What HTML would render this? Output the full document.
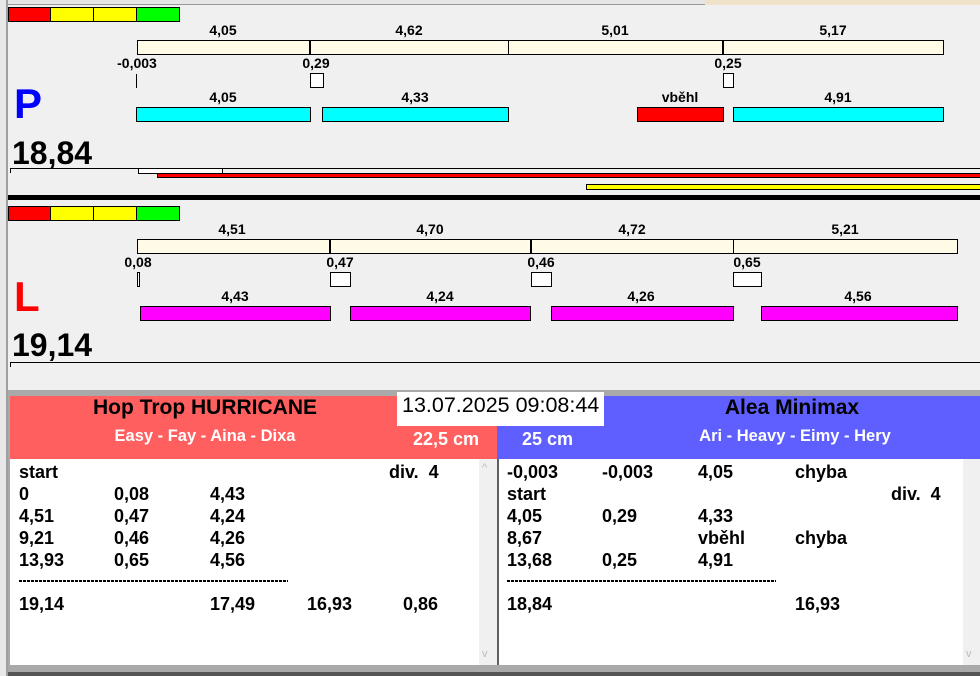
<!DOCTYPE html>
<html><head><meta charset="utf-8"><style>
*{margin:0;padding:0;box-sizing:border-box}
body{width:980px;height:676px;overflow:hidden;background:#f0f0f0;position:relative;font-family:"Liberation Sans",Arial,sans-serif;font-weight:bold;color:#000}
.a{position:absolute}
.b{position:absolute;border:1px solid #000}
.t{position:absolute;font-size:14px;transform:translateX(-50%);line-height:14px;white-space:nowrap}
.r{position:absolute;font-size:18px;line-height:22px;white-space:nowrap}
.d{position:absolute;height:2px;background:repeating-linear-gradient(90deg,#000 0 3px,transparent 3px 4px)}
</style></head><body>
<div class="a" style="left:0;top:0;width:980px;height:5px;background:#e6e6e6;border-bottom:1px solid #999"></div>
<div class="a" style="left:705px;top:0;width:275px;height:5px;background:#efe2c8"></div>
<div class="a" style="left:0;top:0;width:8px;height:676px;background:#e8e8e8;border-right:2px solid #a0a0a0"></div>

<div class="b" style="left:8px;top:7px;width:43px;height:15px;background:#f00"></div>
<div class="b" style="left:50px;top:7px;width:44px;height:15px;background:#ff0"></div>
<div class="b" style="left:93px;top:7px;width:44px;height:15px;background:#ff0"></div>
<div class="b" style="left:136px;top:7px;width:44px;height:15px;background:#0f0"></div>

<div class="t" style="left:223px;top:23px">4,05</div>
<div class="t" style="left:409px;top:23px">4,62</div>
<div class="t" style="left:615px;top:23px">5,01</div>
<div class="t" style="left:833px;top:23px">5,17</div>
<div class="b" style="left:137px;top:40px;width:807px;height:15px;background:#fffbe6"></div>
<div class="a" style="left:309px;top:40px;width:2px;height:15px;background:#000"></div>
<div class="a" style="left:508px;top:40px;width:1px;height:15px;background:#000"></div>
<div class="a" style="left:722px;top:40px;width:2px;height:15px;background:#000"></div>
<div class="t" style="left:137px;top:56px">-0,003</div>
<div class="t" style="left:316px;top:56px">0,29</div>
<div class="t" style="left:728px;top:56px">0,25</div>
<div class="a" style="left:136px;top:74px;width:1px;height:14px;background:#000"></div>
<div class="b" style="left:310px;top:73px;width:14px;height:15px;background:#fff"></div>
<div class="b" style="left:723px;top:73px;width:11px;height:15px;background:#fff"></div>
<div class="t" style="left:223px;top:90px">4,05</div>
<div class="t" style="left:415px;top:90px">4,33</div>
<div class="t" style="left:680px;top:90px">vběhl</div>
<div class="t" style="left:838px;top:90px">4,91</div>
<div class="b" style="left:136px;top:107px;width:175px;height:15px;background:#0ff"></div>
<div class="b" style="left:322px;top:107px;width:187px;height:15px;background:#0ff"></div>
<div class="b" style="left:637px;top:107px;width:87px;height:15px;background:#f00"></div>
<div class="b" style="left:733px;top:107px;width:211px;height:15px;background:#0ff"></div>
<div class="a" style="left:14px;top:80px;font-size:42px;line-height:48px;color:#0000ff">P</div>
<div class="a" style="left:12px;top:135px;font-size:32px;line-height:36px">18,84</div>
<div class="a" style="left:10px;top:168px;width:970px;height:1px;background:#000"></div>
<div class="a" style="left:10px;top:168px;width:1px;height:5px;background:#000"></div>
<div class="b" style="left:138px;top:168px;width:85px;height:6px;background:#fff"></div>
<div class="b" style="left:157px;top:173px;width:830px;height:5px;background:#f00"></div>
<div class="b" style="left:586px;top:184px;width:400px;height:6px;background:#ff0"></div>
<div class="a" style="left:8px;top:195px;width:972px;height:5px;background:#000"></div>

<div class="b" style="left:8px;top:206px;width:43px;height:15px;background:#f00"></div>
<div class="b" style="left:50px;top:206px;width:44px;height:15px;background:#ff0"></div>
<div class="b" style="left:93px;top:206px;width:44px;height:15px;background:#ff0"></div>
<div class="b" style="left:136px;top:206px;width:44px;height:15px;background:#0f0"></div>
<div class="t" style="left:232px;top:222px">4,51</div>
<div class="t" style="left:430px;top:222px">4,70</div>
<div class="t" style="left:632px;top:222px">4,72</div>
<div class="t" style="left:845px;top:222px">5,21</div>
<div class="b" style="left:137px;top:239px;width:821px;height:15px;background:#fffbe6"></div>
<div class="a" style="left:329px;top:239px;width:2px;height:15px;background:#000"></div>
<div class="a" style="left:530px;top:239px;width:2px;height:15px;background:#000"></div>
<div class="a" style="left:733px;top:239px;width:1px;height:15px;background:#000"></div>
<div class="t" style="left:138px;top:255px">0,08</div>
<div class="t" style="left:340px;top:255px">0,47</div>
<div class="t" style="left:541px;top:255px">0,46</div>
<div class="t" style="left:747px;top:255px">0,65</div>
<div class="b" style="left:137px;top:272px;width:3px;height:15px;background:#fff"></div>
<div class="b" style="left:330px;top:272px;width:21px;height:15px;background:#fff"></div>
<div class="b" style="left:531px;top:272px;width:21px;height:15px;background:#fff"></div>
<div class="b" style="left:733px;top:272px;width:29px;height:15px;background:#fff"></div>
<div class="t" style="left:235px;top:289px">4,43</div>
<div class="t" style="left:440px;top:289px">4,24</div>
<div class="t" style="left:641px;top:289px">4,26</div>
<div class="t" style="left:858px;top:289px">4,56</div>
<div class="b" style="left:140px;top:306px;width:191px;height:15px;background:#f0f"></div>
<div class="b" style="left:350px;top:306px;width:181px;height:15px;background:#f0f"></div>
<div class="b" style="left:551px;top:306px;width:183px;height:15px;background:#f0f"></div>
<div class="b" style="left:761px;top:306px;width:197px;height:15px;background:#f0f"></div>
<div class="a" style="left:14px;top:273px;font-size:42px;line-height:48px;color:#ff0000">L</div>
<div class="a" style="left:12px;top:327px;font-size:32px;line-height:36px">19,14</div>
<div class="a" style="left:10px;top:362px;width:970px;height:1px;background:#000"></div>
<div class="a" style="left:10px;top:362px;width:1px;height:5px;background:#000"></div>

<div class="a" style="left:8px;top:390px;width:972px;height:286px;background:#a9a9a9"></div>
<div class="a" style="left:10px;top:396px;width:487px;height:63px;background:#ff5f5f"></div>
<div class="a" style="left:497px;top:396px;width:483px;height:63px;background:#5f5fff"></div>
<div class="a" style="left:205px;top:396px;transform:translateX(-50%);font-size:21px;line-height:24px;white-space:nowrap">Hop Trop HURRICANE</div>
<div class="a" style="left:205px;top:427px;transform:translateX(-50%);font-size:16.5px;line-height:18px;color:#fff;white-space:nowrap">Easy - Fay - Aina - Dixa</div>
<div class="a" style="left:792px;top:396px;transform:translateX(-50%);font-size:21px;line-height:24px;white-space:nowrap">Alea Minimax</div>
<div class="a" style="left:795px;top:427px;transform:translateX(-50%);font-size:16.5px;line-height:18px;color:#fff;white-space:nowrap">Ari - Heavy - Eimy - Hery</div>
<div class="a" style="left:413px;top:428px;font-size:18px;line-height:22px;color:#fff">22,5 cm</div>
<div class="a" style="left:522px;top:428px;font-size:18px;line-height:22px;color:#fff">25 cm</div>
<div class="a" style="left:397px;top:392px;width:207px;height:34px;background:#fff"></div>
<div class="a" style="left:402px;top:392px;font-size:21.5px;line-height:26px;font-weight:normal;white-space:nowrap">13.07.2025 09:08:44</div>

<div class="a" style="left:10px;top:459px;width:487px;height:206px;background:#fff"></div>
<div class="a" style="left:479px;top:459px;width:18px;height:206px;background:#f0f0f0"></div>
<div class="a" style="left:497px;top:459px;width:2px;height:206px;background:#606060"></div>
<div class="a" style="left:499px;top:459px;width:481px;height:206px;background:#fff"></div>
<div class="a" style="left:963px;top:459px;width:17px;height:206px;background:#f0f0f0"></div>
<div class="a" style="left:482px;top:462px;font-size:11px;color:#bbb;font-weight:normal">^</div>
<div class="a" style="left:482px;top:648px;font-size:11px;color:#bbb;font-weight:normal">v</div>
<div class="a" style="left:966px;top:648px;font-size:11px;color:#bbb;font-weight:normal">v</div>
<div class="a" style="left:8px;top:672px;width:972px;height:4px;background:#555"></div>

<div class="r" style="left:19px;top:461px">start</div><div class="r" style="left:389px;top:461px">div.&nbsp; 4</div>
<div class="r" style="left:19px;top:483px">0</div><div class="r" style="left:114px;top:483px">0,08</div><div class="r" style="left:210px;top:483px">4,43</div>
<div class="r" style="left:19px;top:505px">4,51</div><div class="r" style="left:114px;top:505px">0,47</div><div class="r" style="left:210px;top:505px">4,24</div>
<div class="r" style="left:19px;top:527px">9,21</div><div class="r" style="left:114px;top:527px">0,46</div><div class="r" style="left:210px;top:527px">4,26</div>
<div class="r" style="left:19px;top:549px">13,93</div><div class="r" style="left:114px;top:549px">0,65</div><div class="r" style="left:210px;top:549px">4,56</div>
<div class="d" style="left:19px;top:580px;width:269px"></div>
<div class="r" style="left:19px;top:593px">19,14</div><div class="r" style="left:210px;top:593px">17,49</div><div class="r" style="left:307px;top:593px">16,93</div><div class="r" style="left:403px;top:593px">0,86</div>

<div class="r" style="left:507px;top:461px">-0,003</div><div class="r" style="left:602px;top:461px">-0,003</div><div class="r" style="left:698px;top:461px">4,05</div><div class="r" style="left:795px;top:461px">chyba</div>
<div class="r" style="left:507px;top:483px">start</div><div class="r" style="left:891px;top:483px">div.&nbsp; 4</div>
<div class="r" style="left:507px;top:505px">4,05</div><div class="r" style="left:602px;top:505px">0,29</div><div class="r" style="left:698px;top:505px">4,33</div>
<div class="r" style="left:507px;top:527px">8,67</div><div class="r" style="left:698px;top:527px">vběhl</div><div class="r" style="left:795px;top:527px">chyba</div>
<div class="r" style="left:507px;top:549px">13,68</div><div class="r" style="left:602px;top:549px">0,25</div><div class="r" style="left:698px;top:549px">4,91</div>
<div class="d" style="left:507px;top:580px;width:269px"></div>
<div class="r" style="left:507px;top:593px">18,84</div><div class="r" style="left:795px;top:593px">16,93</div>
</body></html>
